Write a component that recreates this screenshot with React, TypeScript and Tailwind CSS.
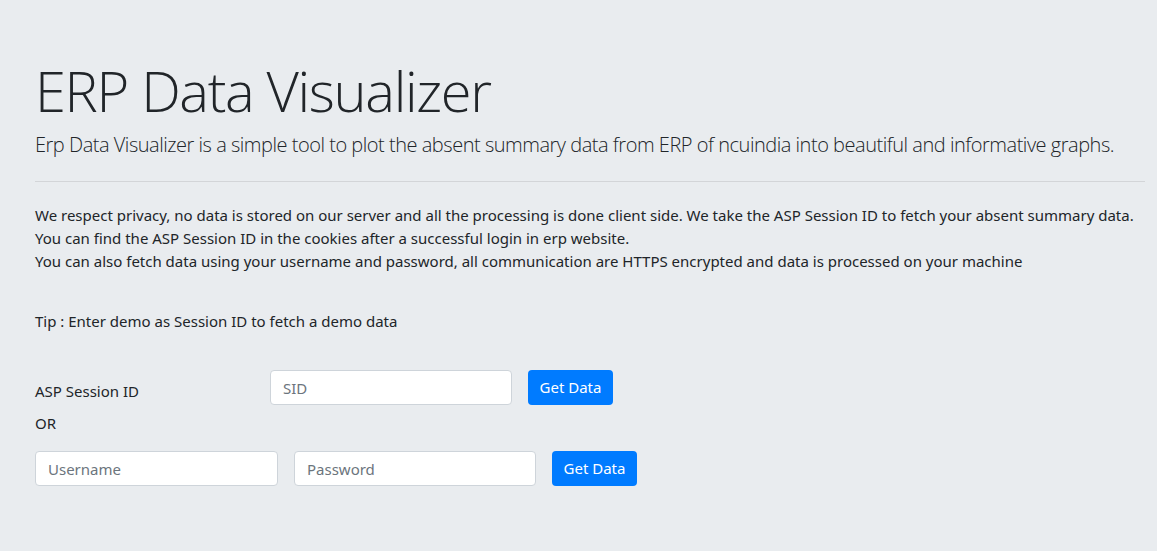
export default function App() {
  return (
    <div className="min-h-[551px] w-full bg-[#e9ecef] text-[#212529] font-['Noto_Sans',sans-serif]">
      <div className="ml-[35px] w-[1110px] pt-[57px]">
        <h1 className="font-['Open_Sans',sans-serif] text-[56px] font-light leading-[1.2] tracking-[-0.024em]">ERP Data Visualizer</h1>
        <p className="mt-[6px] font-['Open_Sans',sans-serif] text-[20px] font-light leading-[1.5] tracking-[-0.024em]">
          Erp Data Visualizer is a simple tool to plot the absent summary data from ERP of ncuindia into beautiful and
          informative graphs.
        </p>
        <hr className="mt-[21px] border-0 border-t border-[#d3d5d8]" />

        <div className="mt-[22px] text-[15px] leading-[23px]">
          <p>
            We respect privacy, no data is stored on our server and all the processing is done client side. We take the ASP
            Session ID to fetch your absent summary data.
          </p>
          <p>You can find the ASP Session ID in the cookies after a successful login in erp website.</p>
          <p>You can also fetch data using your username and password, all communication are HTTPS encrypted and data is processed on your machine</p>
        </div>

        <p className="mt-[37px] text-[15px] leading-[23px]">Tip : Enter demo as Session ID to fetch a demo data</p>

        <div className="mt-[37px] flex items-start text-[15px]">
          <label className="mt-[9px] w-[235px] pt-[1px] leading-[23px]">ASP Session ID</label>
          <input
            placeholder="SID"
            className="h-[35px] w-[242px] rounded border border-[#ced4da] bg-white px-3 text-[15px] placeholder:text-[#6c757d] outline-none"
          />
          <button className="ml-4 h-[35px] w-[85px] rounded bg-[#007bff] text-[15px] text-white">Get Data</button>
        </div>

        <p className="mt-[7px] text-[15px] leading-[23px]">OR</p>

        <div className="mt-[16px] flex items-center gap-4 text-[15px]">
          <input
            placeholder="Username"
            className="h-[35px] w-[243px] rounded border border-[#ced4da] bg-white px-3 text-[15px] placeholder:text-[#6c757d] outline-none"
          />
          <input
            placeholder="Password"
            type="password"
            className="h-[35px] w-[242px] rounded border border-[#ced4da] bg-white px-3 text-[15px] placeholder:text-[#6c757d] outline-none"
          />
          <button className="h-[35px] w-[85px] rounded bg-[#007bff] text-[15px] text-white">Get Data</button>
        </div>
      </div>
    </div>
  );
}
